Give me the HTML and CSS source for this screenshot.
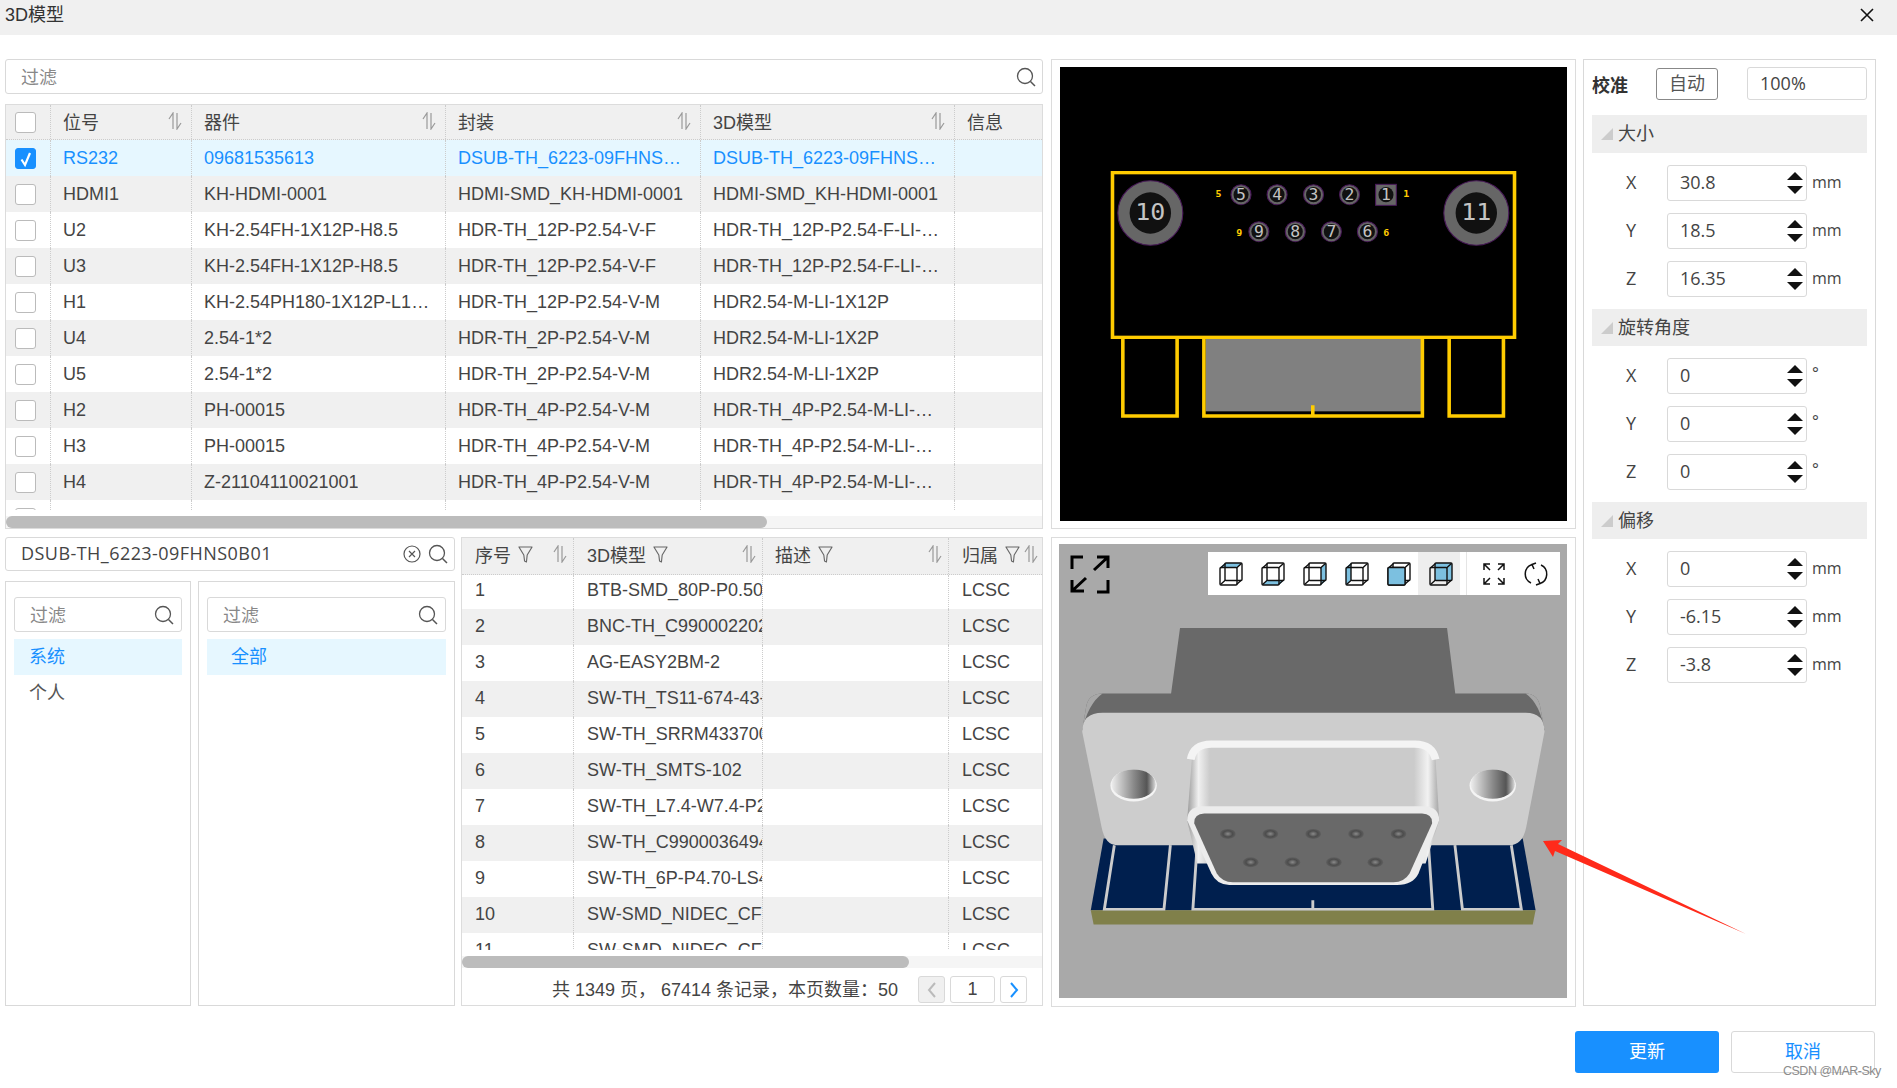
FILE: index.html
```html
<!DOCTYPE html>
<html lang="zh">
<head>
<meta charset="utf-8">
<title>3D模型</title>
<link rel="stylesheet" href="styles.css">
</head>
<body>
<svg class="defs" width="0" height="0" aria-hidden="true">
  <defs>
    <symbol id="sort" viewBox="0 0 14 18"><path d="M5 17V1L1 7M9 1v16l4-6" fill="none" stroke="#999" stroke-width="1.2"/></symbol>
    <symbol id="funnel" viewBox="0 0 16 18"><path d="M1 1h14L9.8 9.5 9 17 7 16 6.2 9.5z" fill="none" stroke="#666" stroke-width="1.2" stroke-linejoin="round"/></symbol>
    <symbol id="search" viewBox="0 0 20 20"><circle cx="9" cy="9" r="7.5" fill="none" stroke="#555" stroke-width="1.3"/><path d="M14.500 14.500 19 19" stroke="#555" stroke-width="1.5"/></symbol>
    <symbol id="clear" viewBox="0 0 18 18"><circle cx="9" cy="9" r="8" fill="none" stroke="#555" stroke-width="1.2"/><path d="M6 6l6 6M12 6l-6 6" stroke="#555" stroke-width="1.2"/></symbol>
    <symbol id="spin" viewBox="0 0 16 22"><path d="M0 8 8 0l8 8zM0 14h16l-8 8z" fill="#111"/></symbol>
    <symbol id="cube" viewBox="0 0 24 24"><g fill="none" stroke="#111" stroke-width="1.4" stroke-linejoin="round"><rect x="1" y="5.5" width="17" height="17.5" rx="1"/><rect x="6" y="1" width="17" height="17.5" rx="1"/><path d="M1.5 6 6.500 1.500M17.500 6l5-4.500M1.500 22.500l5-4.500M17.500 22.500l5-4.500"/></g></symbol>
  </defs>
</svg>

<header class="title-bar">
  <span>3D模型</span>
  <svg class="close" width="14" height="14" viewBox="0 0 14 14"><path d="M1 1l12 12M13 1 1 13" stroke="#111" stroke-width="1.6"/></svg>
</header>

<main class="layout">
  <section class="col-left">
    <div class="input filter-top"><span class="placeholder">过滤</span><svg class="ic-search"><use href="#search"/></svg></div>

    <div class="table table-main">
      <div class="row row-main head">
        <div class="cell cell-check"><span class="check"></span></div>
        <div class="cell">位号<svg class="ic-sort"><use href="#sort"/></svg></div>
        <div class="cell">器件<svg class="ic-sort"><use href="#sort"/></svg></div>
        <div class="cell">封装<svg class="ic-sort"><use href="#sort"/></svg></div>
        <div class="cell">3D模型<svg class="ic-sort"><use href="#sort"/></svg></div>
        <div class="cell">信息</div>
      </div>
      <div class="table-body">
        <div class="row row-main selected">
          <div class="cell cell-check"><span class="check checked"><svg width="20" height="20" viewBox="0 0 20 20"><path d="M5.5 10.5 9 16 14 4" fill="none" stroke="#fff" stroke-width="2.2"/></svg></span></div>
          <div class="cell"><span class="clip">RS232</span></div><div class="cell"><span class="clip">09681535613</span></div><div class="cell"><span class="clip">DSUB-TH_6223-09FHNS0B01</span></div><div class="cell"><span class="clip">DSUB-TH_6223-09FHNS0B01</span></div><div class="cell"></div>
        </div>
        <div class="row row-main shade">
          <div class="cell cell-check"><span class="check"></span></div>
          <div class="cell"><span class="clip">HDMI1</span></div><div class="cell"><span class="clip">KH-HDMI-0001</span></div><div class="cell"><span class="clip">HDMI-SMD_KH-HDMI-0001</span></div><div class="cell"><span class="clip">HDMI-SMD_KH-HDMI-0001</span></div><div class="cell"></div>
        </div>
        <div class="row row-main">
          <div class="cell cell-check"><span class="check"></span></div>
          <div class="cell"><span class="clip">U2</span></div><div class="cell"><span class="clip">KH-2.54FH-1X12P-H8.5</span></div><div class="cell"><span class="clip">HDR-TH_12P-P2.54-V-F</span></div><div class="cell"><span class="clip">HDR-TH_12P-P2.54-F-LI-MX12P</span></div><div class="cell"></div>
        </div>
        <div class="row row-main shade">
          <div class="cell cell-check"><span class="check"></span></div>
          <div class="cell"><span class="clip">U3</span></div><div class="cell"><span class="clip">KH-2.54FH-1X12P-H8.5</span></div><div class="cell"><span class="clip">HDR-TH_12P-P2.54-V-F</span></div><div class="cell"><span class="clip">HDR-TH_12P-P2.54-F-LI-MX12P</span></div><div class="cell"></div>
        </div>
        <div class="row row-main">
          <div class="cell cell-check"><span class="check"></span></div>
          <div class="cell"><span class="clip">H1</span></div><div class="cell"><span class="clip">KH-2.54PH180-1X12P-L14.8</span></div><div class="cell"><span class="clip">HDR-TH_12P-P2.54-V-M</span></div><div class="cell"><span class="clip">HDR2.54-M-LI-1X12P</span></div><div class="cell"></div>
        </div>
        <div class="row row-main shade">
          <div class="cell cell-check"><span class="check"></span></div>
          <div class="cell"><span class="clip">U4</span></div><div class="cell"><span class="clip">2.54-1*2</span></div><div class="cell"><span class="clip">HDR-TH_2P-P2.54-V-M</span></div><div class="cell"><span class="clip">HDR2.54-M-LI-1X2P</span></div><div class="cell"></div>
        </div>
        <div class="row row-main">
          <div class="cell cell-check"><span class="check"></span></div>
          <div class="cell"><span class="clip">U5</span></div><div class="cell"><span class="clip">2.54-1*2</span></div><div class="cell"><span class="clip">HDR-TH_2P-P2.54-V-M</span></div><div class="cell"><span class="clip">HDR2.54-M-LI-1X2P</span></div><div class="cell"></div>
        </div>
        <div class="row row-main shade">
          <div class="cell cell-check"><span class="check"></span></div>
          <div class="cell"><span class="clip">H2</span></div><div class="cell"><span class="clip">PH-00015</span></div><div class="cell"><span class="clip">HDR-TH_4P-P2.54-V-M</span></div><div class="cell"><span class="clip">HDR-TH_4P-P2.54-M-LI-MX4P</span></div><div class="cell"></div>
        </div>
        <div class="row row-main">
          <div class="cell cell-check"><span class="check"></span></div>
          <div class="cell"><span class="clip">H3</span></div><div class="cell"><span class="clip">PH-00015</span></div><div class="cell"><span class="clip">HDR-TH_4P-P2.54-V-M</span></div><div class="cell"><span class="clip">HDR-TH_4P-P2.54-M-LI-MX4P</span></div><div class="cell"></div>
        </div>
        <div class="row row-main shade">
          <div class="cell cell-check"><span class="check"></span></div>
          <div class="cell"><span class="clip">H4</span></div><div class="cell"><span class="clip">Z-21104110021001</span></div><div class="cell"><span class="clip">HDR-TH_4P-P2.54-V-M</span></div><div class="cell"><span class="clip">HDR-TH_4P-P2.54-M-LI-MX4P</span></div><div class="cell"></div>
        </div>
        <div class="row row-main">
          <div class="cell cell-check"><span class="check"></span></div>
          <div class="cell"></div><div class="cell"></div><div class="cell"></div><div class="cell"></div><div class="cell"></div>
        </div>
      </div>
      <div class="scrollbar"><div class="thumb thumb-main"></div></div>
    </div>

    <div class="lower">
      <div class="lib">
        <div class="input search-lib">
          <span class="value">DSUB-TH_6223-09FHNS0B01</span>
          <svg class="ic-clear"><use href="#clear"/></svg>
          <svg class="ic-search ic-search-near"><use href="#search"/></svg>
        </div>
        <div class="lib-panels">
          <div class="lib-panel">
            <div class="input input-small"><span class="placeholder">过滤</span><svg class="ic-search"><use href="#search"/></svg></div>
            <div class="tree-item active">系统</div>
            <div class="tree-item">个人</div>
          </div>
          <div class="lib-panel">
            <div class="input input-small"><span class="placeholder">过滤</span><svg class="ic-search"><use href="#search"/></svg></div>
            <div class="tree-item active indent">全部</div>
          </div>
        </div>
      </div>

      <div class="table table-lib">
        <div class="row row-lib head head-lib">
          <div class="cell">序号<svg class="ic-funnel"><use href="#funnel"/></svg><svg class="ic-sort"><use href="#sort"/></svg></div>
          <div class="cell">3D模型<svg class="ic-funnel"><use href="#funnel"/></svg><svg class="ic-sort"><use href="#sort"/></svg></div>
          <div class="cell cell-desc">描述<svg class="ic-funnel"><use href="#funnel"/></svg><svg class="ic-sort"><use href="#sort"/></svg></div>
          <div class="cell cell-tight">归属<svg class="ic-funnel"><use href="#funnel"/></svg><svg class="ic-sort ic-sort-tight"><use href="#sort"/></svg></div>
        </div>
        <div class="table-body table-body-lib">
          <div class="row row-lib first"><div class="cell">1</div><div class="cell cell-cut">BTB-SMD_80P-P0.50-H1.0</div><div class="cell"></div><div class="cell">LCSC</div></div>
          <div class="row row-lib shade"><div class="cell">2</div><div class="cell cell-cut">BNC-TH_C9900022024</div><div class="cell"></div><div class="cell">LCSC</div></div>
          <div class="row row-lib"><div class="cell">3</div><div class="cell cell-cut">AG-EASY2BM-2</div><div class="cell"></div><div class="cell">LCSC</div></div>
          <div class="row row-lib shade"><div class="cell">4</div><div class="cell cell-cut">SW-TH_TS11-674-43-BK</div><div class="cell"></div><div class="cell">LCSC</div></div>
          <div class="row row-lib"><div class="cell">5</div><div class="cell cell-cut">SW-TH_SRRM4337000</div><div class="cell"></div><div class="cell">LCSC</div></div>
          <div class="row row-lib shade"><div class="cell">6</div><div class="cell cell-cut">SW-TH_SMTS-102</div><div class="cell"></div><div class="cell">LCSC</div></div>
          <div class="row row-lib"><div class="cell">7</div><div class="cell cell-cut">SW-TH_L7.4-W7.4-P2.54</div><div class="cell"></div><div class="cell">LCSC</div></div>
          <div class="row row-lib shade"><div class="cell">8</div><div class="cell cell-cut">SW-TH_C99000364940</div><div class="cell"></div><div class="cell">LCSC</div></div>
          <div class="row row-lib"><div class="cell">9</div><div class="cell cell-cut">SW-TH_6P-P4.70-LS4.0</div><div class="cell"></div><div class="cell">LCSC</div></div>
          <div class="row row-lib shade"><div class="cell">10</div><div class="cell cell-cut">SW-SMD_NIDEC_CFS-0402</div><div class="cell"></div><div class="cell">LCSC</div></div>
          <div class="row row-lib"><div class="cell">11</div><div class="cell cell-cut">SW-SMD_NIDEC_CFS-0401</div><div class="cell"></div><div class="cell">LCSC</div></div>
        </div>
        <div class="scrollbar scrollbar-lib"><div class="thumb thumb-lib"></div></div>
        <div class="pager">
          <span class="pager-text">共 1349 页， 67414 条记录，本页数量：50</span>
          <span class="page-btn disabled"><svg width="10" height="16" viewBox="0 0 10 16"><path d="M8 1 2 8l6 7" fill="none" stroke="#bbb" stroke-width="2"/></svg></span>
          <span class="page-num">1</span>
          <span class="page-btn"><svg width="10" height="16" viewBox="0 0 10 16"><path d="M2 1l6 7-6 7" fill="none" stroke="#1890ff" stroke-width="2"/></svg></span>
        </div>
      </div>
    </div>
  </section>

  <section class="col-view">
    <div class="view-box">
      <svg class="canvas-pcb" viewBox="56 50 1420 1362" preserveAspectRatio="none">
        <rect x="56" y="50" width="1420" height="1362" fill="#000"/>
        <rect x="464" y="865" width="603" height="218" fill="#808080"/>
        <g fill="none" stroke="#ffcc00" stroke-width="10">
          <rect x="203" y="367" width="1126" height="494"/>
          <path d="M232 861V1097H384V861M1146 861V1097H1298V861M459 861V1097H1071V861M764 1065V1097"/>
        </g>
        <g stroke="#4a1a5a" stroke-width="3" fill="#666">
          <ellipse cx="309" cy="488" rx="91" ry="97"/>
          <ellipse cx="1222" cy="488" rx="91" ry="97"/>
          <rect x="940" y="402" width="58" height="63"/>
          <ellipse cx="563" cy="433" rx="28" ry="30"/><ellipse cx="664" cy="433" rx="28" ry="30"/><ellipse cx="766" cy="433" rx="28" ry="30"/><ellipse cx="867" cy="433" rx="28" ry="30"/>
          <ellipse cx="613" cy="544" rx="28" ry="30"/><ellipse cx="715" cy="544" rx="28" ry="30"/><ellipse cx="816" cy="544" rx="28" ry="30"/><ellipse cx="917" cy="544" rx="28" ry="30"/>
        </g>
        <g fill="#111">
          <ellipse cx="309" cy="488" rx="58" ry="62"/><ellipse cx="1222" cy="488" rx="58" ry="62"/>
          <ellipse cx="969" cy="433" rx="21" ry="23"/>
          <ellipse cx="563" cy="433" rx="21" ry="23"/><ellipse cx="664" cy="433" rx="21" ry="23"/><ellipse cx="766" cy="433" rx="21" ry="23"/><ellipse cx="867" cy="433" rx="21" ry="23"/>
          <ellipse cx="613" cy="544" rx="21" ry="23"/><ellipse cx="715" cy="544" rx="21" ry="23"/><ellipse cx="816" cy="544" rx="21" ry="23"/><ellipse cx="917" cy="544" rx="21" ry="23"/>
        </g>
        <g class="pcb-num pcb-big">
          <text x="309" y="510">10</text><text x="1222" y="510">11</text>
        </g>
        <g class="pcb-num pcb-mid">
          <text x="563" y="450">5</text><text x="664" y="450">4</text><text x="766" y="450">3</text><text x="867" y="450">2</text><text x="969" y="450">1</text>
          <text x="613" y="561">9</text><text x="715" y="561">8</text><text x="816" y="561">7</text><text x="917" y="561">6</text>
        </g>
        <g class="pcb-label">
          <text x="500" y="441">5</text><text x="1026" y="441">1</text><text x="558" y="556">9</text><text x="970" y="556">6</text>
        </g>
      </svg>
    </div>
    <div class="view-box view-box-3d">
      <div class="stage">
        <svg class="canvas-3d" viewBox="53 42 1423 1361" preserveAspectRatio="none">
          <defs>
            <linearGradient id="hole" x1="0" x2="1" y1="0" y2="0"><stop offset="0" stop-color="#eee"/><stop offset=".5" stop-color="#8a8a8a"/><stop offset=".8" stop-color="#555"/><stop offset="1" stop-color="#ddd"/></linearGradient>
            <linearGradient id="shell" x1="0" x2="1" y1="0" y2="0"><stop offset="0" stop-color="#9a9a9a"/><stop offset=".045" stop-color="#f0f0f0"/><stop offset=".09" stop-color="#cbcbcb"/><stop offset=".9" stop-color="#cbcbcb"/><stop offset=".955" stop-color="#f2f2f2"/><stop offset="1" stop-color="#a5a5a5"/></linearGradient>
            <linearGradient id="corner-l" x1="0" x2="1" y1="0" y2="0"><stop offset="0" stop-color="#8b8b8b"/><stop offset="1" stop-color="#696969"/></linearGradient>
            <radialGradient id="pin"><stop offset="0" stop-color="#8a8a8a"/><stop offset=".6" stop-color="#4c4c4c"/><stop offset="1" stop-color="#5f5f5f"/></radialGradient>
          </defs>
          <rect x="53" y="42" width="1423" height="1361" fill="#a9a9a9"/>
          <path d="M392 294H1140L1163 490H1360Q1392 490 1400 525L1413 600H118L130 525Q138 490 175 490H367Z" fill="#696969"/>
          <path d="M118 600 130 525Q138 490 175 490 135 520 118 600ZM1413 600 1400 525Q1392 490 1360 490 1400 520 1413 600Z" fill="#a8a8a8"/>
          <path d="M178 925H1352L1388 1140H142Z" fill="#001f4e"/>
          <path d="M142 1140H1388L1380 1183H150Z" fill="#80804a"/>
          <path d="M208 945 180 1137H347L365 945M440 945 428 1137H1100L1088 945M1162 945 1183 1137H1348L1320 945M764 1110V1137" fill="none" stroke="#ccc" stroke-width="8"/>
          <path d="M175 548H1360Q1413 548 1413 605L1362 890Q1352 945 1315 945H215Q182 945 172 890L118 605Q118 548 175 548Z" fill="#cdcdcd"/>
          <ellipse cx="262" cy="766" rx="65" ry="48" fill="#f4f4f4"/>
          <ellipse cx="262" cy="762" rx="62" ry="44" fill="url(#hole)"/>
          <ellipse cx="1268" cy="766" rx="65" ry="48" fill="#f4f4f4"/>
          <ellipse cx="1268" cy="762" rx="62" ry="44" fill="url(#hole)"/>
          <path d="M425 690Q430 645 480 645H1050Q1100 645 1108 690L1118 870 1080 1000H440L412 870Z" fill="url(#shell)"/>
          <path d="M422 688Q430 642 480 642H1050Q1098 642 1108 688" fill="none" stroke="#f4f4f4" stroke-width="22"/>
          <path d="M455 828H1075Q1118 830 1118 870L1060 1030Q1045 1064 1000 1064H530Q495 1064 480 1030L412 870Q412 830 455 828Z" fill="#ececec"/>
          <path d="M460 850H1070Q1100 852 1098 880L1035 1030Q1020 1056 990 1056H540Q510 1056 495 1030L432 880Q430 852 460 850Z" fill="#696969"/>
          <g fill="url(#pin)">
            <ellipse cx="526" cy="911" rx="22" ry="15"/><ellipse cx="645" cy="911" rx="22" ry="15"/><ellipse cx="765" cy="911" rx="22" ry="15"/><ellipse cx="885" cy="911" rx="22" ry="15"/><ellipse cx="1004" cy="911" rx="22" ry="15"/>
            <ellipse cx="590" cy="996" rx="22" ry="15"/><ellipse cx="707" cy="996" rx="22" ry="15"/><ellipse cx="823" cy="996" rx="22" ry="15"/><ellipse cx="939" cy="996" rx="22" ry="15"/>
          </g>
        </svg>
        <svg class="fullscreen" width="40" height="39" viewBox="0 0 40 39"><path d="M13 2H2V14M38 25V37H27M24 15 38 2M27 2H38V13M16 23 2 36M2 25V36H14" fill="none" stroke="#000" stroke-width="3"/></svg>
        <div class="toolbar">
          <span class="tool"><svg class="cube" viewBox="0 0 24 24"><path d="M1 5.5 6 1h17l-5 4.500z" fill="#7cc0e0"/><use href="#cube"/></svg></span>
          <span class="tool"><svg class="cube" viewBox="0 0 24 24"><path d="M1 23l5-4.500h17L18 23z" fill="#7cc0e0"/><use href="#cube"/></svg></span>
          <span class="tool"><svg class="cube" viewBox="0 0 24 24"><path d="M18 5.5 23 1v17.500L18 23z" fill="#7cc0e0"/><use href="#cube"/></svg></span>
          <span class="tool"><svg class="cube" viewBox="0 0 24 24"><path d="M1 5.5 6 1v17.500L1 23z" fill="#7cc0e0"/><use href="#cube"/></svg></span>
          <span class="tool"><svg class="cube" viewBox="0 0 24 24"><use href="#cube"/><rect x="1" y="5.5" width="17" height="17.500" rx="1" fill="#7cc0e0" stroke="#111" stroke-width="1.4"/></svg></span>
          <span class="tool tool-active"><svg class="cube" viewBox="0 0 24 24"><rect x="6" y="1" width="17" height="17.500" fill="#7cc0e0"/><use href="#cube"/></svg></span>
          <span class="tool-sep"></span>
          <span class="tool"><svg width="24" height="24" viewBox="0 0 24 24"><path d="M2 8V2h6M2 2l6 6M22 8V2h-6M22 2l-6 6M2 16v6h6M2 22l6-6M22 16v6h-6M22 22l-6-6" fill="none" stroke="#111" stroke-width="1.5"/></svg></span>
          <span class="tool"><svg width="26" height="24" viewBox="0 0 26 24"><path d="M9 2.500A10 10 0 0 0 8 21M17 21.500A10 10 0 0 0 18 3M13 1 9 2.500 11 7M13 23l4-1.500L15 17" fill="none" stroke="#111" stroke-width="1.5"/></svg></span>
        </div>
      </div>
    </div>
  </section>

  <aside class="col-props">
    <div class="calib">
      <strong class="calib-label">校准</strong>
      <span class="btn-auto">自动</span>
      <span class="calib-value">100%</span>
    </div>
    <div class="section section-first"><i class="tri"></i>大小</div>
    <div class="prop"><span class="prop-axis">X</span><span class="num"><span>30.8</span><svg class="spin"><use href="#spin"/></svg></span><span class="unit">mm</span></div>
    <div class="prop"><span class="prop-axis">Y</span><span class="num"><span>18.5</span><svg class="spin"><use href="#spin"/></svg></span><span class="unit">mm</span></div>
    <div class="prop"><span class="prop-axis">Z</span><span class="num"><span>16.35</span><svg class="spin"><use href="#spin"/></svg></span><span class="unit">mm</span></div>
    <div class="section"><i class="tri"></i>旋转角度</div>
    <div class="prop"><span class="prop-axis">X</span><span class="num"><span>0</span><svg class="spin"><use href="#spin"/></svg></span><span class="unit unit-deg">°</span></div>
    <div class="prop"><span class="prop-axis">Y</span><span class="num"><span>0</span><svg class="spin"><use href="#spin"/></svg></span><span class="unit unit-deg">°</span></div>
    <div class="prop"><span class="prop-axis">Z</span><span class="num"><span>0</span><svg class="spin"><use href="#spin"/></svg></span><span class="unit unit-deg">°</span></div>
    <div class="section"><i class="tri"></i>偏移</div>
    <div class="prop"><span class="prop-axis">X</span><span class="num"><span>0</span><svg class="spin"><use href="#spin"/></svg></span><span class="unit">mm</span></div>
    <div class="prop"><span class="prop-axis">Y</span><span class="num"><span>-6.15</span><svg class="spin"><use href="#spin"/></svg></span><span class="unit">mm</span></div>
    <div class="prop"><span class="prop-axis">Z</span><span class="num"><span>-3.8</span><svg class="spin"><use href="#spin"/></svg></span><span class="unit">mm</span></div>
  </aside>
</main>

<footer class="actions">
  <span class="btn btn-primary">更新</span>
  <span class="btn btn-cancel">取消</span>
</footer>

<svg class="annotation" width="210" height="100" viewBox="1540 838 210 100"><path d="M1543 841 1562 840 1558 844 1746 934 1555 851 1553 857Z" fill="#ff2a1a"/></svg>
<span class="watermark">CSDN @MAR-Sky</span>
</body>
</html>
```
FILE: styles.css
```css
* { box-sizing: border-box; }
html, body { margin: 0; padding: 0; }
body {
  position: relative;
  width: 1897px;
  height: 1088px;
  overflow: hidden;
  background: #fff;
  color: #444;
  font-family: "Liberation Sans", "Noto Sans CJK SC", sans-serif;
  font-size: 18px;
}
.defs { position: absolute; }

.title-bar {
  height: 35px;
  background: #f0f0f0;
  padding: 1px 22px 0 5px;
  display: flex;
  align-items: center;
  justify-content: space-between;
  line-height: 29px;
  color: #333;
}
.title-bar span { align-self: flex-start; }
.close { margin-right: 1px; margin-bottom: 6px; }

.layout {
  display: grid;
  grid-template-columns: 1038px 525px 292px;
  column-gap: 8px;
  padding: 24px 0 0 5px;
  height: 972px;
}
.col-left { display: flex; flex-direction: column; }
.col-view { display: flex; flex-direction: column; gap: 8px; margin-right: 1px; width: 525px; }
.col-props {
  margin-left: -1px;
  border: 1px solid #d9d9d9;
  padding: 7px 8px 0;
  height: 947px;
}

.input {
  display: flex;
  align-items: center;
  border: 1px solid #d9d9d9;
  border-radius: 3px;
  background: #fff;
  padding: 0 6px 0 15px;
  height: 35px;
}
.placeholder { color: #888; flex: 1; padding-bottom: 2px; }
.value {
  flex: 1;
  font-family: "Open Sans", "Noto Sans CJK SC", sans-serif;
  color: #444;
  white-space: nowrap;
  letter-spacing: 0.45px;
  padding-bottom: 3px;
}
.ic-search { width: 20px; height: 20px; flex: none; }
.ic-search-near { margin-left: 7px; }
.ic-clear { width: 18px; height: 18px; flex: none; }

.table {
  border: 1px solid #dcdcdc;
  display: flex;
  flex-direction: column;
  overflow: hidden;
}
.table-main { margin-top: 10px; height: 425px; }
.table-body { flex: 1; overflow: hidden; min-height: 0; }
.row { display: grid; height: 36px; }
.row-main { grid-template-columns: 45px 141px 254px 255px 254px 1fr; }
.row-lib { grid-template-columns: 112px 189px 186px 1fr; }
.head { height: 35px; background: #f0f0f0; border-bottom: 1px dotted #ccc; }
.head .cell { padding-bottom: 2px; }
.head-lib { height: 37px; }
.first { height: 34px; }
.shade { background: #f0f0f0; }
.selected { background: #e6f7ff; color: #1890ff; }
.cell {
  display: flex;
  align-items: center;
  min-width: 0;
  padding: 0 9px 0 12px;
  border-right: 1px dotted #ccc;
  white-space: nowrap;
  overflow: hidden;
}
.cell:last-child { border-right: 0; }
.head .cell-check { padding: 0 0 0 9px; }
.cell-check { padding: 0 0 0 9px; }
.row-lib .cell { padding-left: 13px; padding-bottom: 2px; }
.row-lib.first .cell { padding-bottom: 4px; }
.head-lib .cell { padding: 0 6px 4px 13px; }
.head-lib .cell-desc { padding-left: 12px; }
.head-lib .cell-tight { padding-right: 2px; }
.row-lib .cell-cut { padding-right: 0; }
.clip { overflow: hidden; text-overflow: ellipsis; min-width: 0; }
.check {
  display: block;
  width: 21px;
  height: 21px;
  flex: none;
  border: 1px solid #bbb;
  border-radius: 3px;
  background: #fff;
}
.checked { background: #1890ff; border-color: #1890ff; }
.checked svg { display: block; }
.ic-sort { width: 14px; height: 18px; margin-left: auto; flex: none; }
.ic-sort-tight { margin-left: 4px; }
.ic-funnel { width: 15px; height: 17px; margin-left: 7px; flex: none; }

.scrollbar { height: 12px; background: #f5f5f5; flex: none; margin-top: 6px; border-top: 0; }
.thumb { height: 12px; background: #bcbcbc; border-radius: 6px; }
.thumb-main { width: 761px; }
.thumb-lib { width: 447px; }

.lower {
  margin-top: 8px;
  display: grid;
  grid-template-columns: 450px 582px;
  column-gap: 6px;
  height: 469px;
}
.lib { display: flex; flex-direction: column; gap: 10px; }
.search-lib { height: 34px; }
.lib-panels { flex: 1; display: grid; grid-template-columns: 186px 257px; column-gap: 7px; }
.lib-panel { border: 1px solid #d9d9d9; padding: 15px 8px 0; }
.input-small { margin-bottom: 7px; padding-right: 7px; }
.tree-item { height: 36px; line-height: 36px; padding-left: 15px; color: #555; }
.active { background: #e6f7ff; color: #1890ff; }
.indent { padding-left: 24px; }

.table-lib { height: 469px; }
.table-body-lib { flex: none; height: 375px; }
.scrollbar-lib { margin-top: 6px; }

.pager {
  flex: 1;
  display: flex;
  align-items: center;
  justify-content: flex-end;
  padding: 6px 15px 0 0;
  gap: 5px;
  color: #444;
}
.pager-text { margin-right: 15px; padding-bottom: 3px; }
.page-btn, .page-num {
  display: flex;
  align-items: center;
  justify-content: center;
  height: 27px;
  border: 1px solid #d9d9d9;
  border-radius: 3px;
  background: #fff;
}
.page-btn { width: 27px; }
.disabled { background: #f0f0f0; }
.page-num { width: 45px; }

.view-box { border: 1px solid #dcdcdc; height: 470px; padding: 7px 8px 7px 8px; }
.canvas-pcb { display: block; width: 507px; height: 454px; }
.view-box-3d { padding: 6px 8px 7px 7px; }
.stage { position: relative; width: 508px; height: 454px; }
.canvas-3d { display: block; width: 508px; height: 454px; }
.fullscreen { position: absolute; left: 11px; top: 11px; }
.toolbar {
  position: absolute;
  left: 149px;
  top: 8px;
  width: 352px;
  height: 43px;
  background: #fff;
  display: flex;
  align-items: stretch;
}
.tool { width: 42px; display: flex; align-items: center; justify-content: center; flex: none; }
.tool-active { background: #eee; }
.tool-sep { width: 1px; margin: 0 6px; background: #e5e5e5; flex: none; }
.cube { width: 24px; height: 24px; margin-left: 3px; }
.pcb-num text { fill: #c4c4c4; font-family: "DejaVu Sans Mono", monospace; text-anchor: middle; }
.pcb-big text { font-size: 70px; }
.pcb-mid text { font-size: 46px; }
.pcb-label text { fill: #ffcc00; font-family: "DejaVu Sans Mono", monospace; font-size: 28px; font-weight: 700; text-anchor: middle; }

.calib { display: flex; align-items: center; height: 33px; margin-bottom: 15px; }
.calib-label { width: 64px; font-size: 18px; color: #333; }
.btn-auto {
  width: 62px;
  height: 32px;
  border: 1px solid #888;
  border-radius: 3px;
  text-align: center;
  line-height: 30px;
  color: #555;
}
.calib-value {
  margin-left: 29px;
  width: 120px;
  height: 33px;
  border: 1px solid #d9d9d9;
  border-radius: 3px;
  padding-left: 12px;
  line-height: 30px;
  font-family: "Open Sans", sans-serif;
}
.section {
  height: 37px;
  background: #eee;
  display: flex;
  align-items: center;
  padding: 0 0 4px 9px;
  color: #444;
  margin-bottom: 12px;
}
.section-first { height: 38px; }
.tri {
  width: 0;
  height: 0;
  margin: 4px 5px 0 0;
  border-style: solid;
  border-width: 0 0 12px 12px;
  border-color: transparent transparent #ccc transparent;
  flex: none;
}
.prop {
  display: flex;
  align-items: center;
  height: 36px;
  margin-bottom: 12px;
  font-family: "Open Sans", "Noto Sans CJK SC", sans-serif;
}
.prop-axis { width: 75px; padding: 0 0 2px 34px; flex: none; }
.num {
  width: 140px;
  height: 36px;
  border: 1px solid #d9d9d9;
  border-radius: 3px;
  display: flex;
  align-items: center;
  justify-content: space-between;
  padding: 0 3px 0 12px;
  flex: none;
}
.num > span { padding-bottom: 2px; }
.spin { width: 16px; height: 22px; }
.unit { margin-left: 5px; font-size: 16px; padding-bottom: 2px; }
.unit-deg { align-self: flex-start; margin-top: 4px; }

.actions {
  display: flex;
  justify-content: flex-end;
  gap: 12px;
  padding: 24px 22px 0 0;
}
.btn {
  width: 144px;
  height: 42px;
  border-radius: 3px;
  text-align: center;
  line-height: 42px;
}
.btn-primary { background: #1890ff; color: #fff; }
.btn-cancel { border: 1px solid #d9d9d9; color: #1890ff; line-height: 40px; }

.annotation { position: absolute; left: 1540px; top: 838px; }
.watermark {
  position: absolute;
  left: 1783px;
  top: 1064px;
  font-size: 12.5px;
  color: #8c8c8c;
  letter-spacing: -0.5px;
}
```
